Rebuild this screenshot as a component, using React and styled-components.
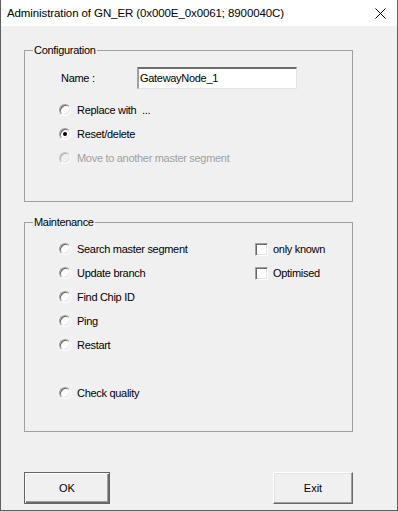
import React from 'react';
import styled, {createGlobalStyle, css} from 'styled-components';

const GlobalStyle = createGlobalStyle`
  html, body {
    margin: 0;
    padding: 0;
    background: #ffffff;
  }
`

const Frame = styled.div`
  width: 398px;
  height: 511px;
  box-sizing: border-box;
  display: flex;
  flex-direction: column;
  background: #f0f0f0;
  border: 1px solid #5f5f5f;
  border-top: none;
  font-family: "Liberation Sans", Arial, sans-serif;
  font-size: 11px;
  letter-spacing: -0.3px;
  color: #000;
`

const TitleBar = styled.div`
  height: 26px;
  flex: none;
  background: #ffffff;
  display: flex;
  align-items: center;
  justify-content: space-between;
  padding: 0 11px 0 6px;
  font-size: 11.5px;
  letter-spacing: -0.1px;
`

const CloseIcon = () => (
  <svg width="11" height="11" viewBox="0 0 11 11">
    <path d="M0.5 0.5 L10.5 10.5 M10.5 0.5 L0.5 10.5" stroke="#000" strokeWidth="1" fill="none" />
  </svg>
)

const Body = styled.div`
  flex: 1;
  display: flex;
  flex-direction: column;
  padding: 18px 44px 0 23px;
`

const Group = styled.fieldset`
  flex: none;
  margin: 0;
  padding: ${props => props.$pad};
  border: 1px solid #a0a0a0;
  min-width: 0;
  & + & {
    margin-top: 14px;
  }
`

const Legend = styled.legend`
  margin-left: 8px;
  padding: 0 1px;
  line-height: 13px;
`

const GroupContent = styled.div`
  padding-left: 34px;
`

const NameRow = styled.div`
  display: flex;
  align-items: center;
  height: 22px;
  padding-left: 2px;
  margin-bottom: 9px;
`

const NameLabel = styled.span`
  width: 76px;
`

const TextBox = styled.div`
  width: 160px;
  height: 22px;
  box-sizing: border-box;
  background: #fff;
  border-style: solid;
  border-width: 2px 1px 1px 2px;
  border-color: #6d6d6d #e3e3e3 #e3e3e3 #a0a0a0;
  padding: 3px 0 0 1px;
`

const OptionGrid = styled.div`
  display: grid;
  grid-template-columns: 196px 1fr;
  grid-auto-rows: 24px;
`

const Spacer = styled.div`
  grid-column: 1 / -1;
  height: 24px;
`

const Option = styled.label`
  display: flex;
  align-items: center;
  gap: 5px;
  ${props => props.$disabled && css`
    color: #a0a0a0;
  `}
`

const RadioCircle = styled.span`
  width: 12px;
  height: 12px;
  box-sizing: border-box;
  border-radius: 50%;
  border: 1px solid;
  border-color: #a0a0a0 #ffffff #ffffff #a0a0a0;
  box-shadow: inset 1px 1px 0 #696969, inset -1px -1px 0 #e3e3e3;
  background: ${props => props.$disabled ? '#f0f0f0' : '#ffffff'};
  display: flex;
  align-items: center;
  justify-content: center;
  flex: none;
  margin-right: 1px;
  ${props => props.$disabled && css`
    border-color: #c8c8c8 #ffffff #ffffff #c8c8c8;
    box-shadow: inset 1px 1px 0 #b4b4b4, inset -1px -1px 0 #e3e3e3;
  `}
  &::after {
    content: '';
    width: 4px;
    height: 4px;
    border-radius: 50%;
    background: #000;
    display: ${props => props.$checked ? 'block' : 'none'};
  }
`

const CheckBox = styled.span`
  width: 13px;
  height: 13px;
  box-sizing: border-box;
  border: 1px solid;
  border-color: #a0a0a0 #ffffff #ffffff #a0a0a0;
  box-shadow: inset 1px 1px 0 #696969, inset -1px -1px 0 #e3e3e3;
  background: #fff;
  flex: none;
`

const ButtonRow = styled.div`
  flex: none;
  display: flex;
  justify-content: space-between;
  margin-top: 40px;
`

const Button = styled.button`
  font-family: inherit;
  font-size: 11px;
  letter-spacing: 0;
  color: #000;
  height: 32px;
  width: ${props => props.$width}px;
  padding: 0;
  background: #f0f0f0;
  border: 1px solid;
  border-color: #ffffff #696969 #696969 #ffffff;
  box-shadow: inset -1px -1px 0 #a0a0a0, inset 1px 1px 0 #e3e3e3;
  ${props => props.$default && css`
    border: 1px solid #646464;
    box-shadow: inset 1px 1px 0 #ffffff, inset -1px -1px 0 #696969, inset -2px -2px 0 #a0a0a0;
  `}
`

function Radio({children, checked, disabled}) {
  return (
    <Option $disabled={disabled}>
      <RadioCircle $checked={checked} $disabled={disabled} />
      {children}
    </Option>
  )
}

function Check({children}) {
  return (
    <Option>
      <CheckBox />
      {children}
    </Option>
  )
}

export default function App() {
  return (
    <>
      <GlobalStyle />
      <Frame>
        <TitleBar>
          <span>Administration of GN_ER (0x000E_0x0061; 8900040C)</span>
          <CloseIcon />
        </TitleBar>
        <Body>
          <Group $pad="10px 0 31px 0">
            <Legend>Configuration</Legend>
            <GroupContent>
              <NameRow>
                <NameLabel>Name :</NameLabel>
                <TextBox>GatewayNode_1</TextBox>
              </NameRow>
              <OptionGrid>
                <Radio>Replace with&nbsp; ...</Radio>
                <span />
                <Radio checked>Reset/delete</Radio>
                <span />
                <Radio disabled>Move to another master segment</Radio>
              </OptionGrid>
            </GroupContent>
          </Group>
          <Group $pad="8px 0 26px 0">
            <Legend>Maintenance</Legend>
            <GroupContent>
              <OptionGrid>
                <Radio>Search master segment</Radio>
                <Check>only known</Check>
                <Radio>Update branch</Radio>
                <Check>Optimised</Check>
                <Radio>Find Chip ID</Radio>
                <span />
                <Radio>Ping</Radio>
                <span />
                <Radio>Restart</Radio>
                <span />
                <Spacer />
                <Radio>Check quality</Radio>
              </OptionGrid>
            </GroupContent>
          </Group>
          <ButtonRow>
            <Button $default $width={86}>OK</Button>
            <Button $width={80}>Exit</Button>
          </ButtonRow>
        </Body>
      </Frame>
    </>
  )
}
